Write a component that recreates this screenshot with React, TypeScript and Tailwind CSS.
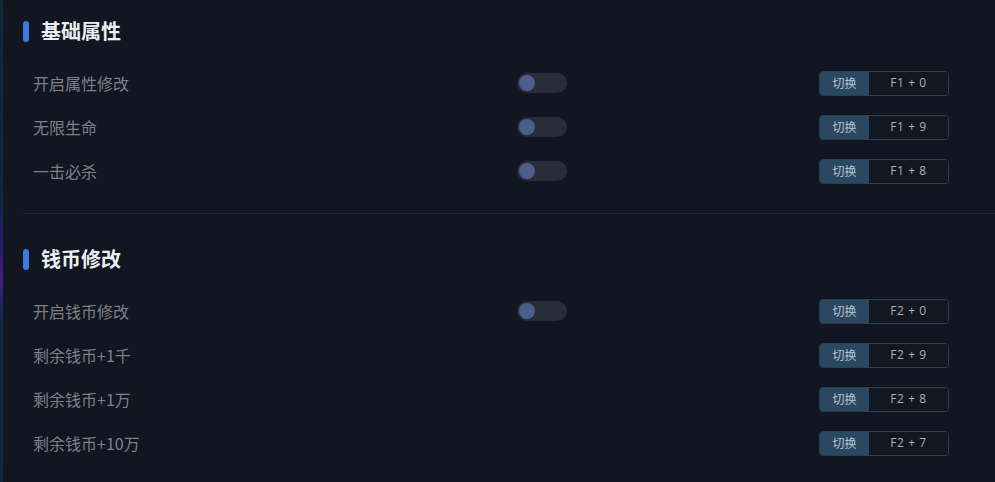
import React from "react";

type Row = { label: string; toggle: boolean; key: string };

const sections: { title: string; rows: Row[] }[] = [
  {
    title: "基础属性",
    rows: [
      { label: "开启属性修改", toggle: true, key: "F1 + 0" },
      { label: "无限生命", toggle: true, key: "F1 + 9" },
      { label: "一击必杀", toggle: true, key: "F1 + 8" },
    ],
  },
  {
    title: "钱币修改",
    rows: [
      { label: "开启钱币修改", toggle: true, key: "F2 + 0" },
      { label: "剩余钱币+1千", toggle: false, key: "F2 + 9" },
      { label: "剩余钱币+1万", toggle: false, key: "F2 + 8" },
      { label: "剩余钱币+10万", toggle: false, key: "F2 + 7" },
    ],
  },
];

function Toggle() {
  return (
    <div className="w-[50px] h-[20px] rounded-full bg-[#282d38] flex items-center px-[2px]">
      <div className="w-[16px] h-[16px] rounded-full bg-[#4c5f8c]" />
    </div>
  );
}

function Hotkey({ k }: { k: string }) {
  return (
    <div className="flex w-[130px] h-[25px] rounded-[4px] border border-[#2e3c4c] overflow-hidden text-[12px]">
      <div className="w-[49px] bg-[#2b4862] text-[#b9c3cd] flex items-center justify-center">切换</div>
      <div
        className="flex-1 bg-[#121720] text-[#a9b1ba] flex items-center justify-center tracking-[0.6px] whitespace-pre"
        style={{ fontFamily: '"Open Sans", "Noto Sans CJK SC", sans-serif' }}
      >
        {k}
      </div>
    </div>
  );
}

export default function App() {
  return (
    <div
      className="flex w-[995px] h-[482px] bg-[#121620] overflow-hidden"
      style={{ fontFamily: '"Noto Sans CJK SC", "Noto Sans", sans-serif' }}
    >
      <div className="w-[3px] shrink-0 bg-[linear-gradient(to_bottom,#0c2a36_0%,#0e2740_40%,#2a1a70_52%,#4b1b8c_58%,#10284a_66%,#0b2746_100%)]" />
      <div className="flex-1 pl-[20px] pt-[20px]">
        {sections.map((s, i) => (
          <div key={i}>
            {i > 0 && <div className="h-px bg-[#222833] mt-[20px] mb-[34px]" />}
            <div className="flex items-center h-[22px] gap-[12px]">
              <div className="w-[6px] h-[21px] rounded-full bg-[#3f7ae0]" />
              <div className="text-[20px] font-bold text-[#e9eef4] leading-none">{s.title}</div>
            </div>
            <div className="mt-[19px]">
              {s.rows.map((r, j) => (
                <div key={j} className="grid grid-cols-[484px_302px_130px] items-center h-[44px] pl-[10px]">
                  <div className="text-[16px] text-[#7b8089] leading-none">{r.label}</div>
                  <div>{r.toggle && <Toggle />}</div>
                  <Hotkey k={r.key} />
                </div>
              ))}
            </div>
          </div>
        ))}
      </div>
    </div>
  );
}
